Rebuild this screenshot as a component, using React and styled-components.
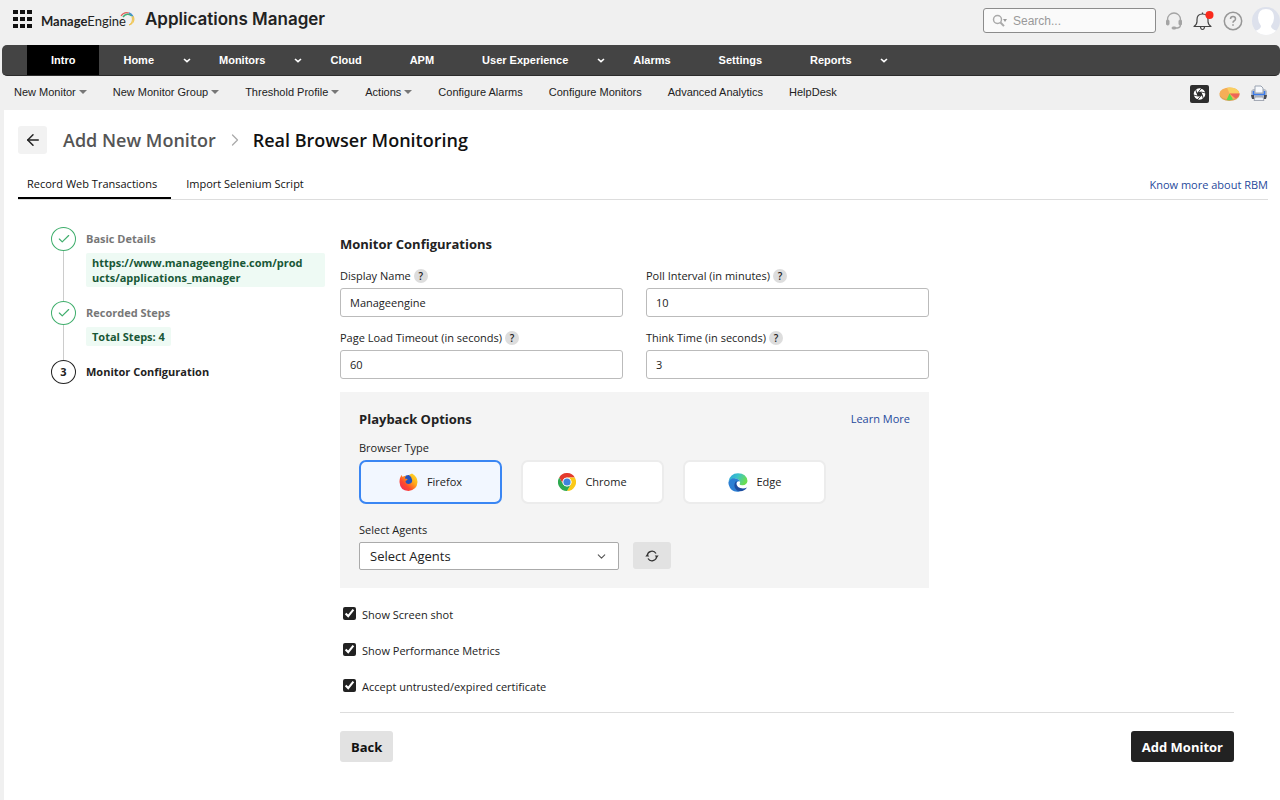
import { useState } from "react";
import styled, { createGlobalStyle } from "styled-components";
import { FiArrowLeft, FiCheck, FiChevronDown, FiChevronRight } from "react-icons/fi";

const MENU = [
  { label: "Intro", active: true },
  { label: "Home", more: true },
  { label: "Monitors", more: true },
  { label: "Cloud" },
  { label: "APM" },
  { label: "User Experience", more: true },
  { label: "Alarms" },
  { label: "Settings" },
  { label: "Reports", more: true },
];

const SUB_MENU = [
  { label: "New Monitor", more: true },
  { label: "New Monitor Group", more: true },
  { label: "Threshold Profile", more: true },
  { label: "Actions", more: true },
  { label: "Configure Alarms" },
  { label: "Configure Monitors" },
  { label: "Advanced Analytics" },
  { label: "HelpDesk" },
];

const FIELDS = [
  { id: "displayName", label: "Display Name", value: "Manageengine" },
  { id: "pollInterval", label: "Poll Interval (in minutes)", value: "10" },
  { id: "timeout", label: "Page Load Timeout (in seconds)", value: "60" },
  { id: "thinkTime", label: "Think Time (in seconds)", value: "3" },
];

const BROWSERS = [
  { name: "Firefox", Icon: FirefoxIcon },
  { name: "Chrome", Icon: ChromeIcon },
  { name: "Edge", Icon: EdgeIcon },
];

const CHECKS = [
  "Show Screen shot",
  "Show Performance Metrics",
  "Accept untrusted/expired certificate",
];

export default function App() {
  const [browser, setBrowser] = useState("Firefox");

  return (
    <>
      <GlobalStyle />
      <Header>
        <IconButton aria-label="Applications">
          <GridIcon />
        </IconButton>
        <Brand>
          <Company>
            <b>Manage</b>Engine
          </Company>
          <SwooshIcon />
          <Product>Applications Manager</Product>
        </Brand>
        <SearchBox>
          <SearchIcon />
          <SearchInput aria-label="Search" placeholder="Search..." />
        </SearchBox>
        <HeaderIcons>
          <IconButton aria-label="Support">
            <HeadsetIcon />
          </IconButton>
          <IconButton aria-label="Notifications">
            <BellIcon />
          </IconButton>
          <IconButton aria-label="Help">
            <HelpIcon />
          </IconButton>
          <IconButton aria-label="Profile">
            <AvatarIcon />
          </IconButton>
        </HeaderIcons>
      </Header>

      <MainNav>
        {MENU.map((item) => (
          <NavItem key={item.label}>
            <NavLink href="#" $active={item.active}>
              {item.label}
            </NavLink>
            {item.more && (
              <NavMore aria-label={`${item.label} menu`}>
                <svg width="8" height="5" viewBox="0 0 8 5">
                  <path d="M1 1l3 2.6L7 1" fill="none" stroke="#fff" strokeWidth="1.6" />
                </svg>
              </NavMore>
            )}
          </NavItem>
        ))}
      </MainNav>

      <SubNav>
        {SUB_MENU.map((item) => (
          <SubLink key={item.label} href="#">
            {item.label}
            {item.more && <Caret />}
          </SubLink>
        ))}
        <SubTools>
          <IconButton aria-label="Snapshot">
            <ApertureIcon />
          </IconButton>
          <IconButton aria-label="Reports">
            <PieIcon />
          </IconButton>
          <IconButton aria-label="Print">
            <PrinterIcon />
          </IconButton>
        </SubTools>
      </SubNav>

      <Page>
        <TitleRow>
          <BackArrow aria-label="Go back">
            <FiArrowLeft size={18} />
          </BackArrow>
          <Crumb href="#">Add New Monitor</Crumb>
          <FiChevronRight size={20} color="#aaa" strokeWidth={1.5} />
          <PageTitle>Real Browser Monitoring</PageTitle>
        </TitleRow>

        <Tabs>
          <Tab $active>Record Web Transactions</Tab>
          <Tab>Import Selenium Script</Tab>
          <KnowMore href="#">Know more about RBM</KnowMore>
        </Tabs>

        <Body>
          <Steps>
            <Step>
              <Rail>
                <Bullet $done>
                  <FiCheck size={14} />
                </Bullet>
                <Line />
              </Rail>
              <StepContent>
                <StepName>Basic Details</StepName>
                <StepInfo>
                  https://www.manageengine.com/prod
                  <wbr />
                  ucts/applications_manager
                </StepInfo>
              </StepContent>
            </Step>
            <Step>
              <Rail>
                <Bullet $done>
                  <FiCheck size={14} />
                </Bullet>
                <Line />
              </Rail>
              <StepContent>
                <StepName>Recorded Steps</StepName>
                <StepInfo>Total Steps: 4</StepInfo>
              </StepContent>
            </Step>
            <Step>
              <Rail>
                <Bullet>3</Bullet>
              </Rail>
              <StepContent>
                <StepName $current>Monitor Configuration</StepName>
              </StepContent>
            </Step>
          </Steps>

          <Form onSubmit={(e) => e.preventDefault()}>
            <FormInner>
              <Heading>Monitor Configurations</Heading>
              <Fields>
                {FIELDS.map((field) => (
                  <Field key={field.id}>
                    <LabelRow>
                      <Label htmlFor={field.id}>{field.label}</Label>
                      <Hint type="button" aria-label={`About ${field.label}`}>
                        ?
                      </Hint>
                    </LabelRow>
                    <Input id={field.id} defaultValue={field.value} />
                  </Field>
                ))}
              </Fields>

              <Panel>
                <PanelHead>
                  <Heading>Playback Options</Heading>
                  <TextLink href="#">Learn More</TextLink>
                </PanelHead>
                <Label as="div" id="browserType">
                  Browser Type
                </Label>
                <Browsers role="group" aria-labelledby="browserType">
                  {BROWSERS.map(({ name, Icon }) => (
                    <BrowserCard
                      key={name}
                      type="button"
                      aria-pressed={browser === name}
                      $selected={browser === name}
                      onClick={() => setBrowser(name)}
                    >
                      <Icon />
                      {name}
                    </BrowserCard>
                  ))}
                </Browsers>
                <Label htmlFor="agents">Select Agents</Label>
                <AgentRow>
                  <SelectWrap>
                    <Select id="agents">
                      <option>Select Agents</option>
                    </Select>
                    <FiChevronDown size={13} color="#555" />
                  </SelectWrap>
                  <Refresh type="button" aria-label="Refresh agents">
                    <RefreshIcon />
                  </Refresh>
                </AgentRow>
              </Panel>

              <Checks>
                {CHECKS.map((text) => (
                  <CheckLabel key={text}>
                    <Checkbox defaultChecked />
                    <span>{text}</span>
                  </CheckLabel>
                ))}
              </Checks>
            </FormInner>

            <Footer>
              <Button type="button">Back</Button>
              <Button type="submit" $primary>
                Add Monitor
              </Button>
            </Footer>
          </Form>
        </Body>
      </Page>
    </>
  );
}

function GridIcon() {
  return (
    <svg width="19" height="18" viewBox="0 0 19 18" fill="#111">
      {[0, 7, 14].map((y) =>
        [0, 7, 14].map((x) => <rect key={`${x}-${y}`} x={x} y={y} width="5" height="4" />)
      )}
    </svg>
  );
}

function SwooshIcon() {
  return (
    <Swoosh width="16" height="16" viewBox="0 0 16 16" fill="none">
      <path d="M1 5C3 2 6 1 9 2" stroke="#e0605c" strokeWidth="1.2" />
      <path d="M3 6c2-3 6-4 9-1" stroke="#3fae78" strokeWidth="1.6" />
      <path d="M9 2c3 1 5 4 4 7" stroke="#4a90d0" strokeWidth="1.4" />
      <path d="M13 5c2 3 1 8-4 9 3-2 4-5 3-8" stroke="#f0c34b" strokeWidth="1" fill="#f0d47a" />
    </Swoosh>
  );
}

function SearchIcon() {
  return (
    <svg width="16" height="14" viewBox="0 0 16 14">
      <circle cx="5.500" cy="5.500" r="4" fill="none" stroke="#aaa" strokeWidth="1.5" />
      <path d="M8.500 8.500l3.500 3.600" stroke="#aaa" strokeWidth="2" />
      <path d="M11 5h4l-2 3z" fill="#999" />
    </svg>
  );
}

function HeadsetIcon() {
  return (
    <svg width="18" height="18" viewBox="0 0 18 18" fill="none" stroke="#a4a4a4">
      <path d="M2.500 8V7.500a6.500 6.500 0 0113 0V13q0 2.500-3 3H10" strokeWidth="1.3" />
      <rect x="1.500" y="8" width="2.500" height="5" rx="1" fill="#a4a4a4" />
      <rect x="14" y="8" width="2.500" height="5" rx="1" fill="#a4a4a4" />
      <rect x="7" y="15" width="4" height="2" rx="1" fill="#a4a4a4" />
    </svg>
  );
}

function BellIcon() {
  return (
    <svg width="22" height="22" viewBox="0 0 22 22" fill="none">
      <path
        d="M2 16.500q3-2 3-5V9.500q0-5.500 5.500-5.500T16 9.500v2q0 3 3 5z"
        stroke="#444"
        strokeWidth="1.2"
        strokeLinejoin="round"
      />
      <path d="M8.500 17q.3 2.500 2 2.500t2-2.500M10.500 2.500V4" stroke="#444" strokeWidth="1.2" />
      <circle cx="17.500" cy="5" r="4" fill="#fa2a1c" />
    </svg>
  );
}

function HelpIcon() {
  return (
    <svg width="20" height="20" viewBox="0 0 20 20" fill="none" stroke="#979797">
      <circle cx="10" cy="10" r="8.700" strokeWidth="1.5" />
      <path d="M7.500 8q0-2.500 2.500-2.500T12.500 8q0 1.300-1.500 2-1 .6-1 1.800" strokeWidth="1.5" />
      <circle cx="10" cy="14" r=".5" />
    </svg>
  );
}

function AvatarIcon() {
  return (
    <svg width="28" height="28" viewBox="0 0 28 28">
      <clipPath id="avatarClip">
        <circle cx="14" cy="14" r="14" />
      </clipPath>
      <g clipPath="url(#avatarClip)">
        <rect width="28" height="28" fill="#dde1ec" />
        <path
          d="M14 2q8 0 8 9 0 4-3 8 0 3 6 5v4H3v-4q6-2 6-5-3-4-3-8 0-9 8-9z"
          fill="#fff"
        />
      </g>
    </svg>
  );
}

function ApertureIcon() {
  return (
    <svg width="19" height="18" viewBox="0 0 19 18">
      <rect width="19" height="18" rx="2" fill="#2e2e2e" />
      <circle cx="9.500" cy="9" r="4.200" fill="none" stroke="#fff" strokeWidth="3.200" />
      {[0, 60, 120, 180, 240, 300].map((angle) => (
        <path
          key={angle}
          d="M8.500 6.600L12 3"
          stroke="#2e2e2e"
          strokeWidth=".9"
          transform={`rotate(${angle} 9.500 9)`}
        />
      ))}
    </svg>
  );
}

function PieIcon() {
  return (
    <svg width="21" height="14" viewBox="0 0 21 14">
      <ellipse cx="10.500" cy="8" rx="10" ry="6" fill="#d9a55b" />
      <ellipse cx="10.500" cy="6.500" rx="10" ry="6" fill="#f6ae57" />
      <path d="M10.500 6.500L8 .7q9-1 12 4.300v1.500z" fill="#f9cf62" />
      <path d="M10.500 6.500h10q0 3-4 5z" fill="#ee6558" />
      <path d="M10.500 6.500l3.500 6q-3 1-6.500 .5z" fill="#5bdc4a" />
    </svg>
  );
}

function PrinterIcon() {
  return (
    <svg width="18" height="17" viewBox="0 0 18 17">
      <path d="M1 6l2-2h12l2 2v6l-2 2H3l-2-2z" fill="#b9bec6" />
      <path d="M3.500 6v3.500h11V6" fill="none" stroke="#3c7cec" strokeWidth="1.600" />
      <path d="M5 1h6l2 2v5H5z" fill="#f7f9fc" stroke="#9aa3b1" />
      <path d="M1 10h3v4H2zM14 10h3l-1 4h-2z" fill="#4a4d55" />
      <path d="M5 12h8l1 3.500H4z" fill="#edf0f5" stroke="#9298a4" strokeWidth=".8" />
    </svg>
  );
}

function FirefoxIcon() {
  return (
    <svg width="19" height="18" viewBox="0 0 19 18">
      <defs>
        <linearGradient id="foxBody" x1="1" y1="0" x2="0" y2="1">
          <stop offset="0" stopColor="#ffe52e" />
          <stop offset=".35" stopColor="#ffae1a" />
          <stop offset=".65" stopColor="#ff4a2d" />
          <stop offset="1" stopColor="#f0205e" />
        </linearGradient>
      </defs>
      <circle cx="9.500" cy="8.500" r="6.500" fill="#2553bd" />
      <path
        d="M1 5l1.500-3 1.200 2Q5 2.600 7 3.200 5.600 4.500 6 5.600l2.500.5-.3 1L6.500 8q0 3 3.200 3 3.800-.5 3.500-4Q12.500 3.500 10 2q1.500-1 3-1.500Q18.500 3.500 18.500 9q-.5 8-9 9-8.500-.5-9-9 0-2 .5-4z"
        fill="url(#foxBody)"
      />
    </svg>
  );
}

function ChromeIcon() {
  return (
    <svg width="18" height="18" viewBox="0 0 24 24">
      <path d="M1.600 6A12 12 0 0122.400 6H12a6 6 0 00-5.200 9z" fill="#e33b2e" />
      <path d="M22.400 6A12 12 0 0112 24l5.200-9A6 6 0 0012 6z" fill="#fbc918" />
      <path d="M12 24A12 12 0 011.600 6l5.200 9a6 6 0 0010.400 0z" fill="#2da94f" />
      <circle cx="12" cy="12" r="5.800" fill="#fff" />
      <circle cx="12" cy="12" r="4.800" fill="#3f83dc" />
    </svg>
  );
}

function EdgeIcon() {
  return (
    <svg width="20" height="19" viewBox="0 0 20 19">
      <defs>
        <linearGradient id="edgeTop" x1="0" y1="0" x2="1" y2=".4">
          <stop offset="0" stopColor="#2b9fdc" />
          <stop offset=".5" stopColor="#3cc4c9" />
          <stop offset="1" stopColor="#6bdd52" />
        </linearGradient>
      </defs>
      <path
        d="M.5 8.500Q2 .5 10 .3q8.500.2 9.500 7.700Q19 12 14.500 12.300q-3 0-3-1.400 1-1 .5-2.400Q10 4.500 5 6 2 7 .5 8.500z"
        fill="url(#edgeTop)"
      />
      <path d="M.5 9Q3 4.500 8 5.500q3 .6 4 3-2.600-1-3.600 1.500Q7 16 12 18.400 3 20 .8 12q-.5-1.500-.3-3z" fill="#2c7fd3" />
      <path d="M7.500 8.800Q4.600 14 9 17.500q6 2.500 10-3-2 1-4 1Q8.500 15 8.300 10q.2-1.500 1.500-2z" fill="#1d4d9f" />
    </svg>
  );
}

function RefreshIcon() {
  return (
    <svg width="14" height="12" viewBox="0 0 14 12" fill="none" stroke="#333" strokeWidth="1.3">
      <path d="M2.300 5.500A4.700 4.700 0 0111 3.500M11.700 6.500A4.700 4.700 0 013 8.500" />
      <path d="M.3 6.500l2-2.500 2 2.500zM9.700 5.500h4l-2 2.500z" fill="#333" stroke="none" />
    </svg>
  );
}

const GlobalStyle = createGlobalStyle`
  * {
    box-sizing: border-box;
  }

  body {
    margin: 0;
    background: #f0f0f0;
    color: #222;
    font-family: "Open Sans", "Noto Sans", sans-serif;
    font-size: 11px;
    line-height: 16px;
  }

  button,
  input,
  select {
    font: inherit;
    color: inherit;
  }

  a {
    text-decoration: none;
  }

  svg {
    flex: none;
  }
`;

const IconButton = styled.button`
  display: flex;
  padding: 0;
  border: 0;
  background: none;
  cursor: pointer;
`;

const Header = styled.header`
  display: flex;
  align-items: center;
  height: 45px;
  padding: 0 0 8px 13px;
`;

const Brand = styled.div`
  display: flex;
  align-items: center;
  flex: 1;
  padding-left: 9px;
  color: #222;
`;

const Company = styled.span`
  padding-top: 4px;
  font-family: Lato, sans-serif;
  font-size: 13px;
`;

const Swoosh = styled.svg`
  margin-left: -6px;
`;

const Product = styled.span`
  margin-left: 9px;
  font-family: Inter, sans-serif;
  font-size: 17px;
  font-weight: 600;
  line-height: 22px;
`;

const SearchBox = styled.div`
  display: flex;
  align-items: center;
  gap: 5px;
  width: 173px;
  height: 25px;
  padding: 0 8px;
  margin-top: 4px;
  border: 1px solid #8c8c8c;
  border-radius: 3px;
  background: #fafafa;
`;

const SearchInput = styled.input`
  flex: 1;
  min-width: 0;
  padding: 0;
  border: 0;
  outline: 0;
  background: none;
  font-family: "Liberation Sans", Arial, sans-serif;
  font-size: 12px;

  &::placeholder {
    color: #999;
  }
`;

const HeaderIcons = styled.div`
  display: flex;
  align-items: center;
  gap: 9px;
  padding: 5px 0 0 9px;
`;

const MainNav = styled.nav`
  display: flex;
  height: 31px;
  margin-left: 2px;
  padding-left: 25px;
  border-bottom: 1px solid #2b2b2b;
  border-radius: 5px;
  background: #444;
`;

const NavItem = styled.div`
  display: flex;
`;

const NavLink = styled.a`
  display: flex;
  align-items: center;
  padding: 0 24px;
  background: ${({ $active }) => ($active ? "#000" : "none")};
  color: #fff;
  font-family: "Liberation Sans", Arial, sans-serif;
  font-weight: bold;
`;

const NavMore = styled.button`
  display: flex;
  align-items: center;
  justify-content: center;
  width: 17px;
  padding: 0;
  border: 0;
  background: none;
`;

const SubNav = styled.nav`
  display: flex;
  align-items: center;
  gap: 26px;
  height: 34px;
  padding: 0 12px 3px 14px;
`;

const SubLink = styled.a`
  display: flex;
  align-items: center;
  gap: 3px;
  color: #222;
  font-family: "Liberation Sans", Arial, sans-serif;
`;

const Caret = styled.i`
  border: 4px solid transparent;
  border-top-color: #777;
  border-bottom: 0;
`;

const SubTools = styled.div`
  display: flex;
  align-items: center;
  gap: 10px;
  margin-left: auto;
  padding-top: 4px;
`;

const Page = styled.main`
  min-height: calc(100vh - 110px);
  margin-left: 4px;
  padding: 16px 12px 38px 14px;
  background: #fff;
`;

const TitleRow = styled.div`
  display: flex;
  align-items: center;
  height: 28px;
`;

const BackArrow = styled.button`
  display: flex;
  align-items: center;
  justify-content: center;
  width: 29px;
  height: 28px;
  margin-right: 16px;
  padding: 0;
  border: 0;
  border-radius: 3px;
  background: #f2f2f2;
`;

const Crumb = styled.a`
  margin-right: 9px;
  color: #555;
  font-size: 18px;
  font-weight: 600;
`;

const PageTitle = styled.h1`
  margin: 0 0 0 8px;
  color: #111;
  font-size: 18px;
  font-weight: 600;
`;

const Tabs = styled.div`
  display: flex;
  align-items: flex-start;
  height: 33px;
  margin-top: 13px;
  border-bottom: 1px solid #ddd;
`;

const Tab = styled.button`
  height: 32px;
  padding: 3px 14px 0 9px;
  margin-right: 6px;
  border: 0;
  border-bottom: 2px solid ${({ $active }) => ($active ? "#000" : "transparent")};
  background: none;
  color: #111;
`;

const TextLink = styled.a`
  color: #1f4a9c;
`;

const KnowMore = styled(TextLink)`
  margin-left: auto;
  padding-top: 10px;
`;

const Body = styled.div`
  display: flex;
  gap: 15px;
  padding: 27px 34px 0 33px;
`;

const Steps = styled.ol`
  width: 274px;
  flex: none;
  margin: 0;
  padding: 0;
  list-style: none;
`;

const Step = styled.li`
  display: flex;
  gap: 10px;
`;

const Rail = styled.div`
  display: flex;
  flex-direction: column;
  align-items: center;
`;

const Bullet = styled.span`
  display: flex;
  align-items: center;
  justify-content: center;
  width: 25px;
  height: 24px;
  border: 1px solid ${({ $done }) => ($done ? "#3fae6c" : "#222")};
  border-radius: 50%;
  color: ${({ $done }) => ($done ? "#3fae6c" : "#222")};
  font-weight: bold;
`;

const Line = styled.span`
  flex: 1;
  width: 1px;
  background: #ccc;
`;

const StepContent = styled.div`
  flex: 1;
  min-width: 0;
  padding: 4px 0 14px;
`;

const StepName = styled.div`
  color: ${({ $current }) => ($current ? "#222" : "#777")};
  font-weight: bold;
`;

const StepInfo = styled.div`
  width: fit-content;
  margin-top: 6px;
  padding: 2px 6px;
  border-radius: 2px;
  background: #eefaf4;
  color: #185736;
  font-weight: bold;
  line-height: 15px;
`;

const Form = styled.form`
  flex: 1;
  min-width: 0;
  padding-top: 9px;
`;

const FormInner = styled.div`
  max-width: 589px;
`;

const Heading = styled.h2`
  margin: 0;
  color: #222;
  font-size: 13px;
  font-weight: bold;
  line-height: 16px;
`;

const Fields = styled.div`
  display: grid;
  grid-template-columns: 1fr 1fr;
  gap: 13px 23px;
  margin-top: 16px;
`;

const Field = styled.div`
  display: flex;
  flex-direction: column;
  gap: 4px;
`;

const LabelRow = styled.div`
  display: flex;
  align-items: center;
  gap: 3px;
`;

const Label = styled.label`
  display: block;
  color: #222;
`;

const Hint = styled.button`
  width: 14px;
  height: 14px;
  padding: 0;
  border: 0;
  border-radius: 50%;
  background: #ddd;
  font-size: 10px;
  font-weight: 600;
  line-height: 14px;
`;

const Input = styled.input`
  width: 100%;
  height: 29px;
  padding: 0 9px;
  border: 1px solid #bbb;
  border-radius: 3px;
  background: #fff;
`;

const Panel = styled.section`
  margin-top: 13px;
  padding: 19px 19px 18px;
  background: #f4f4f4;
`;

const PanelHead = styled.div`
  display: flex;
  align-items: center;
  justify-content: space-between;
  margin-bottom: 13px;
`;

const Browsers = styled.div`
  display: flex;
  gap: 19px;
  margin: 4px 0 18px;
`;

const BrowserCard = styled.button`
  display: flex;
  align-items: center;
  justify-content: center;
  gap: 9px;
  width: 143px;
  height: 44px;
  border: 2px solid ${({ $selected }) => ($selected ? "#3a86f3" : "#ececec")};
  border-radius: 7px;
  background: ${({ $selected }) => ($selected ? "#f2f7ff" : "#fff")};
`;

const AgentRow = styled.div`
  display: flex;
  gap: 14px;
  margin-top: 4px;
`;

const SelectWrap = styled.div`
  display: flex;
  align-items: center;
  width: 260px;
  height: 28px;
  padding-right: 10px;
  border: 1px solid #aaa;
  border-radius: 2px;
  background: #fff;
`;

const Select = styled.select`
  flex: 1;
  height: 26px;
  padding: 0 10px;
  border: 0;
  outline: 0;
  appearance: none;
  background: none;
  font-size: 13px;
`;

const Refresh = styled.button`
  display: flex;
  align-items: center;
  justify-content: center;
  width: 38px;
  height: 27px;
  padding: 0;
  border: 0;
  border-radius: 3px;
  background: #e2e2e2;
`;

const Checks = styled.div`
  display: flex;
  flex-direction: column;
  align-items: flex-start;
  gap: 20px;
  margin-top: 19px;
  padding-left: 3px;
`;

const CheckLabel = styled.label`
  display: flex;
  gap: 6px;
`;

const Checkbox = styled.input.attrs({ type: "checkbox" })`
  width: 13px;
  height: 13px;
  margin: 0;
  accent-color: #222;
`;

const Footer = styled.div`
  display: flex;
  justify-content: space-between;
  margin-top: 17px;
  padding-top: 18px;
  border-top: 1px solid #ddd;
`;

const Button = styled.button`
  height: 31px;
  padding: 0 11px;
  border: 0;
  border-radius: 3px;
  background: ${({ $primary }) => ($primary ? "#222" : "#e2e2e2")};
  color: ${({ $primary }) => ($primary ? "#fff" : "#111")};
  font-size: 13px;
  font-weight: bold;
`;
